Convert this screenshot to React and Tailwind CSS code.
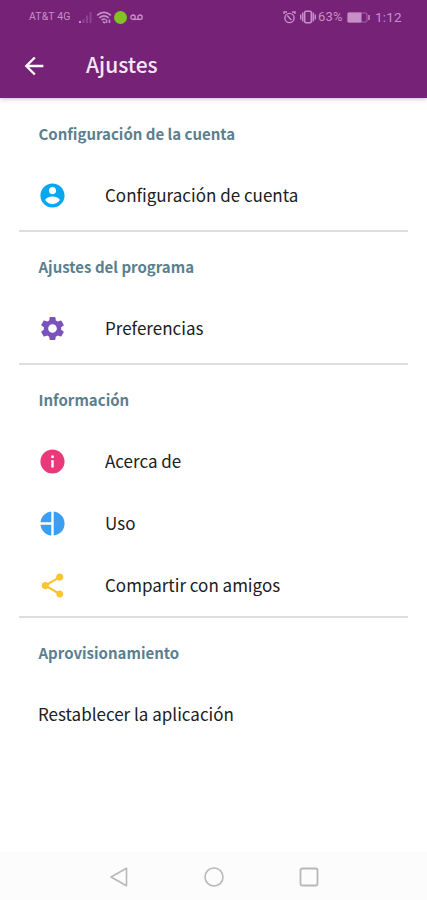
import { MdSettings, MdInfo, MdShare, MdArrowBack } from 'react-icons/md';
import { clsx } from 'clsx';

function AccountIcon({ className }) {
  return (
    <svg className={className} viewBox="0 0 24 24" fill="currentColor">
      <path d="M12 2C6.48 2 2 6.48 2 12s4.480 10 10 10 10-4.480 10-10S17.520 2 12 2zm0 3c1.660 0 3 1.340 3 3s-1.340 3-3 3-3-1.340-3-3 1.340-3 3-3zm0 14.200c-2.500 0-4.710-1.280-6-3.220.030-1.990 4-3.080 6-3.080 1.990 0 5.970 1.090 6 3.080-1.290 1.940-3.500 3.220-6 3.220z" />
    </svg>
  );
}

function PieIcon({ className }) {
  return (
    <svg className={className} viewBox="0 0 24 24" fill="currentColor">
      <path d="M11 2.05V11H2.05C2.5 6.25 6.25 2.5 11 2.05zM11 13v8.95C6.25 21.5 2.5 17.75 2.05 13H11zM13 2.05c5.05.5 9 4.75 9 9.95s-3.95 9.45-9 9.95V2.05z" />
    </svg>
  );
}

const sections = [
  {
    title: 'Configuración de la cuenta',
    items: [{ label: 'Configuración de cuenta', Icon: AccountIcon, color: 'text-[#08a8ee]' }],
  },
  {
    title: 'Ajustes del programa',
    items: [{ label: 'Preferencias', Icon: MdSettings, color: 'text-[#7a52bd]' }],
  },
  {
    title: 'Información',
    tight: true,
    items: [
      { label: 'Acerca de', Icon: MdInfo, color: 'text-[#e83a7a]' },
      { label: 'Uso', Icon: PieIcon, color: 'text-[#3d9df0]' },
      { label: 'Compartir con amigos', Icon: MdShare, color: 'text-[#fcc42e]' },
    ],
  },
  {
    title: 'Aprovisionamiento',
    last: true,
    items: [{ label: 'Restablecer la aplicación' }],
  },
];

function StatusBar() {
  return (
    <div className="flex h-[34px] items-center justify-between pl-[29px] pr-[25px] text-[#c78fc8] font-[Roboto,sans-serif]">
      <div className="flex items-center">
        <span className="w-[50px] whitespace-nowrap text-[10.5px] tracking-[0.1px]">AT&amp;T 4G</span>
        <svg className="h-[13px] w-[13px]" viewBox="0 0 13 13" fill="currentColor">
          <path d="M0 10h2v2H0z" />
          <path d="M3.5 8h2v4h-2zM7 4.500h2V12H7zM10.500 1h2v11h-2z" opacity=".3" />
        </svg>
        <svg className="ml-[4px] h-[13px] w-[17px]" viewBox="0 0 17 13" fill="none" stroke="currentColor" strokeWidth="1.6">
          <path d="M1 4.300Q8 -1.500 15 4.300M3.300 6.800Q8 3 12.700 6.800M5.600 9Q8 7.200 9.500 8.500" />
          <path d="M7 10.800L9 12M10.500 12V8.500M13.500 8.500V12" />
        </svg>
        <span className="ml-[1px] h-[13px] w-[13px] rounded-full bg-[#82c225]" />
        <svg className="ml-[3px] h-[7px] w-[13px]" viewBox="0 0 13 7" fill="none" stroke="currentColor" strokeWidth="1.3">
          <circle cx="3" cy="3.200" r="2.200" />
          <circle cx="10" cy="3.200" r="2.200" />
          <path d="M3 5.400h7" />
        </svg>
      </div>
      <div className="flex items-center">
        <svg className="h-[13px] w-[13px]" viewBox="0 0 13 13" fill="none" stroke="currentColor" strokeWidth="1.4">
          <circle cx="6.500" cy="7" r="4.600" />
          <path d="M1 3V1h3M9 1h3v2M4.300 4.500L6.700 7.200 8.500 9" />
        </svg>
        <svg className="ml-[4px] h-[14px] w-[16px]" viewBox="0 0 16 14" fill="none" stroke="currentColor" strokeWidth="1.5">
          <rect x="4.700" y="1.200" width="6.600" height="11.600" rx="1.200" />
          <path d="M2.800 2.500v9M.7 4.500v5M13.200 2.500v9M15.300 4.500v5" />
        </svg>
        <span className="ml-[2px] w-[29px] whitespace-nowrap text-[13px] tracking-[0.2px]">63%</span>
        <svg className="h-[11px] w-[23px]" viewBox="0 0 23 11" fill="none" stroke="currentColor">
          <rect x="1" y="1" width="19" height="9" rx="1" strokeOpacity=".6" />
          <path d="M1 1h13v9H1z" fill="currentColor" />
          <path d="M22 3v5" strokeWidth="1.500" />
        </svg>
        <span className="ml-[5px] w-[27px] whitespace-nowrap text-[13.5px] tracking-[0.2px]">1:12</span>
      </div>
    </div>
  );
}

function Row({ label, Icon, color }) {
  return (
    <div className="flex h-[62px] items-center pl-[19px]">
      {Icon && (
        <span className="w-[67px] shrink-0">
          <Icon className={clsx('h-[29px] w-[29px]', color)} />
        </span>
      )}
      <span className="whitespace-nowrap pb-[1px] text-[17px] text-[#202020]">{label}</span>
    </div>
  );
}

export default function App() {
  return (
    <div className="flex h-[900px] w-[427px] flex-col overflow-hidden bg-white font-['Noto_Sans_CJK_SC',sans-serif]">
      <header className="h-[98px] shrink-0 bg-[#762277] shadow-[0_1px_4px_rgba(90,30,90,0.3)]">
        <StatusBar />
        <div className="flex h-[64px] items-center pl-[20px]">
          <MdArrowBack className="h-[28px] w-[28px] text-white" />
          <h1 className="ml-[38px] pb-[2px] text-[21px] font-medium text-[#f5e6f5]">Ajustes</h1>
        </div>
      </header>

      <main className="flex-1 px-[19px] pt-[1px]">
        {sections.map((section) => (
          <section
            key={section.title}
            className={clsx(
              'pt-[5px]',
              !section.last && 'border-b-2 border-[#dedede]',
              !section.last && !section.tight && 'pb-[4px]',
            )}
          >
            <h2 className="flex h-[60px] items-center pl-[19.5px] text-[15px] font-bold text-[#5b7f8f]">{section.title}</h2>
            {section.items.map((item) => (
              <Row key={item.label} {...item} />
            ))}
          </section>
        ))}
      </main>

      <nav className="flex h-[48px] shrink-0 items-center justify-between bg-[#fcfcfc] pl-[109px] pr-[108px] pt-[1px] text-[#b8b8b8]">
        <svg className="h-[20px] w-[20px]" viewBox="0 0 20 20" fill="none" stroke="currentColor" strokeWidth="1.6" strokeLinejoin="round">
          <path d="M17.500 1.300v17.400L2 10z" />
        </svg>
        <svg className="h-[20px] w-[20px]" viewBox="0 0 20 20" fill="none" stroke="currentColor" strokeWidth="1.6">
          <circle cx="10" cy="10" r="9" />
        </svg>
        <svg className="h-[20px] w-[20px]" viewBox="0 0 20 20" fill="none" stroke="currentColor" strokeWidth="1.800">
          <rect x="1.500" y="1.500" width="17" height="17" rx="1.800" />
        </svg>
      </nav>
    </div>
  );
}
